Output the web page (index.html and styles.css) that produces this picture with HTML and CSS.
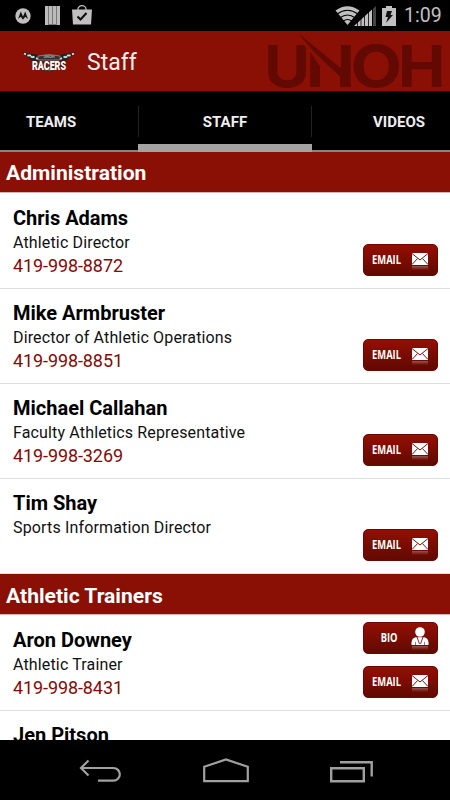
FILE: index.html
```html
<!DOCTYPE html>
<html lang="en">

<head>
  <title>Staff</title>
  <meta charset="UTF-8">
  <meta name="viewport" content="width=device-width, initial-scale=1">
  <link rel="stylesheet" href="styles.css">
</head>

<body>

  <!-- shared icons -->
  <svg class="sprite" width="0" height="0">
    <defs>
      <linearGradient id="fade" x1="0" y1="0" x2="0" y2="1">
        <stop offset="0" stop-color="#fff" stop-opacity=".3"/>
        <stop offset="1" stop-color="#fff" stop-opacity="0"/>
      </linearGradient>
    </defs>
    <symbol id="mail" viewBox="0 0 18 18">
      <rect x="1" y="1" width="16" height="12" fill="#fff"/>
      <path d="M1 1.500l8 6.500 8-6.500M1 12.500l5.600-6M17 12.500l-5.600-6" fill="none" stroke="#861008" stroke-width="1"/>
      <rect x="1" y="14" width="16" height="4" fill="url(#fade)"/>
    </symbol>
    <symbol id="person" viewBox="0 0 18 23">
      <circle cx="9" cy="5" r="4.800" fill="#fff"/>
      <path d="M.5 18v-2.500q.5-5 4.500-5.300h8q4 .3 4.500 5.300V18z" fill="#fff"/>
      <path d="M6 10l2.500 7M12 10l-2.500 7" fill="none" stroke="#861008" stroke-width=".9"/>
      <path d="M4.500 18v-3M13.500 18v-3" stroke="#861008" stroke-width=".6"/>
      <rect x="1" y="19" width="16" height="4" fill="url(#fade)"/>
    </symbol>
  </svg>

  <div class="status-bar">
    <div class="notifications">
      <svg width="16" height="16" viewBox="0 0 16 16">
        <circle cx="8" cy="8" r="7.700" fill="#c0c0c0"/>
        <path d="M3 11L5.800 3.500 8 8.400l2.200-4.900L13 11l-2.800-2.200L8 11.800 5.800 8.800z" fill="#111"/>
      </svg>
      <svg width="15" height="19" viewBox="0 0 15 19">
        <path d="M0 0h15v19H0z" fill="#777"/>
        <path d="M0 0h3v19H0zM4 0h3v18H4zM8 0h3v18H8zM12 0h3v19h-3z" fill="#bbb"/>
      </svg>
      <svg width="20" height="20" viewBox="0 0 20 20">
        <path d="M6 6V4a4 3.300 0 0 1 8 0v2" fill="none" stroke="#c0c0c0" stroke-width="1.300"/>
        <path d="M0 4.500h20L19 19.500H1z" fill="#c0c0c0"/>
        <path d="M5.500 11.500l3 3 6-6.500" fill="none" stroke="#111" stroke-width="2.200"/>
      </svg>
    </div>
    <div class="system">
      <svg class="wifi" width="25" height="19" viewBox="0 0 25 19">
        <path d="M0.500 4.500Q12.500-4 24.500 4.500L12.500 19z" fill="#c0c0c0"/>
        <path d="M2 8q10.500-7.500 21 0M5 11.800q7.500-5.500 15 0M8 15.300q4.500-3.500 9 0" fill="none" stroke="#000" stroke-width="1.100"/>
      </svg>
      <svg class="signal" width="22" height="20" viewBox="0 0 22 20">
        <path d="M0 20L18 3.500V20z" fill="#c0c0c0"/>
        <path d="M19 2.700L22 0v20h-3z" fill="#444"/>
        <path d="M3.500 14v6M7 10v10M10.500 7v13M14.500 4v16M18.500 0v20" stroke="#000" stroke-width=".8"/>
      </svg>
      <svg class="battery" width="14" height="20" viewBox="0 0 14 20">
        <path d="M4 0h6v2h4v18H0V2h4z" fill="#c0c0c0"/>
        <path d="M5 5h5l-1.500 4H11l-7 8 2-6H3.500z" fill="#111"/>
      </svg>
      <span class="clock">1:09</span>
    </div>
  </div>

  <div class="app-bar">
    <svg class="team-logo" width="56" height="24" viewBox="0 0 56 24">
      <path d="M1 3l15 2.500 9 7.500-13 0z" fill="#222"/>
      <path d="M55 3l-15 2.500-9 7.500 13 0z" fill="#222"/>
      <path d="M3 4.500l10 4.500M8 6l9 4M53 4.500L43 9M48 6l-9 4" stroke="#ddd" stroke-width="1.800" stroke-dasharray="2.200 1.600"/>
      <ellipse cx="28" cy="14" rx="11" ry="8" fill="#666" stroke="#333"/>
      <path d="M17 7q11-3 22 0v4H17z" fill="#333" stroke="#999" stroke-width=".7"/>
      <path d="M11 11.500h34v8H11z" fill="#5a1512"/>
      <text class="logo-small" x="28" y="8.700" text-anchor="middle">UNOH</text>
      <text class="logo-text" x="11" y="20.500" textLength="34" lengthAdjust="spacingAndGlyphs">RACERS</text>
    </svg>
    <h1>Staff</h1>
    <svg class="school-logo" width="184" height="60" viewBox="0 0 184 60">
      <text x="-2" y="56" textLength="46" lengthAdjust="spacingAndGlyphs">U</text>
      <text x="40" y="56" textLength="49" lengthAdjust="spacingAndGlyphs">N</text>
      <!-- the blade takes the place of the N's diagonal -->
      <path class="gap" d="M36 11L41 18 43 11H74V57H55V37L43 19V12z"/>
      <path d="M33 3L74 36.500l4-2 7 21.500L48 21z"/>
      <text x="84.500" y="56" textLength="51.500" lengthAdjust="spacingAndGlyphs">O</text>
      <text x="132" y="56" textLength="47.500" lengthAdjust="spacingAndGlyphs">H</text>
    </svg>
  </div>

  <div class="tabs">
    <div class="tab tab-left">TEAMS</div>
    <div class="tab active">STAFF</div>
    <div class="tab tab-right">VIDEOS</div>
  </div>

  <div class="staff-list">
    <h2>Administration</h2>
    <div class="person">
      <div class="info">
        <h3>Chris Adams</h3>
        <p>Athletic Director</p>
        <p class="phone">419-998-8872</p>
      </div>
      <div class="actions">
        <button><span>EMAIL</span><svg class="mail"><use href="#mail"/></svg></button>
      </div>
    </div>
    <div class="person">
      <div class="info">
        <h3>Mike Armbruster</h3>
        <p>Director of Athletic Operations</p>
        <p class="phone">419-998-8851</p>
      </div>
      <div class="actions">
        <button><span>EMAIL</span><svg class="mail"><use href="#mail"/></svg></button>
      </div>
    </div>
    <div class="person">
      <div class="info">
        <h3>Michael Callahan</h3>
        <p>Faculty Athletics Representative</p>
        <p class="phone">419-998-3269</p>
      </div>
      <div class="actions">
        <button><span>EMAIL</span><svg class="mail"><use href="#mail"/></svg></button>
      </div>
    </div>
    <div class="person">
      <div class="info">
        <h3>Tim Shay</h3>
        <p>Sports Information Director</p>
      </div>
      <div class="actions">
        <button><span>EMAIL</span><svg class="mail"><use href="#mail"/></svg></button>
      </div>
    </div>

    <h2 class="second">Athletic Trainers</h2>
    <div class="person">
      <div class="info">
        <h3>Aron Downey</h3>
        <p>Athletic Trainer</p>
        <p class="phone">419-998-8431</p>
      </div>
      <div class="actions">
        <button><span class="bio-label">BIO</span><svg class="bio"><use href="#person"/></svg></button>
        <button><span>EMAIL</span><svg class="mail"><use href="#mail"/></svg></button>
      </div>
    </div>
    <div class="person">
      <div class="info">
        <h3>Jen Pitson</h3>
      </div>
    </div>
  </div>

  <div class="nav-bar">
    <svg width="42" height="26" viewBox="0 0 42 26">
      <path d="M9.500 3.500L2 11l7.500 7.500M2 11h32.500a6.300 6.300 0 0 1 0 12.700H19" fill="none" stroke="#a0a0a0" stroke-width="2.200"/>
    </svg>
    <svg width="46" height="26" viewBox="0 0 46 26">
      <path d="M1.200 9.800L23 2.500l21.800 7.300v14.400H1.200z" fill="none" stroke="#a0a0a0" stroke-width="2.200"/>
    </svg>
    <svg width="43" height="26" viewBox="0 0 43 26">
      <path d="M1.200 11.200h32.600v13H1.200zM10 5.200h31.700v14.300" fill="none" stroke="#a0a0a0" stroke-width="2.400"/>
    </svg>
  </div>

</body>

</html>
```
FILE: styles.css
```css
body {
  font-family: Roboto, sans-serif;
  display: flex;
  flex-direction: column;
  width: 450px;
  height: 800px;
  margin: 0;
  overflow: hidden;
  background: #FFFFFF;
}

h1, h2, h3, p {
  margin: 0;
}

.sprite {
  position: absolute;
}

.status-bar {
  display: flex;
  justify-content: space-between;
  height: 31px;
  background: #000000;
}

.notifications {
  display: flex;
  align-items: center;
  gap: 14px;
  padding-left: 15px;
}

.notifications svg:last-child {
  margin-left: -2px;
  margin-bottom: 2px;
}

.system {
  display: flex;
  align-items: center;
  padding-right: 8px;
}

.signal {
  margin-left: -6px;
}

.battery {
  margin-left: 6px;
}

.clock {
  width: 38px;
  margin-left: 8px;
  font-size: 19.5px;
  line-height: 32px;
  color: #C0C0C0;
}

.app-bar {
  display: flex;
  align-items: center;
  box-sizing: border-box;
  height: 61px;
  padding-left: 21px;
  background: #8A0F05;
  border-bottom: 1px solid #3A0703;
}

.team-logo,
.school-logo {
  overflow: visible;
}

.logo-small {
  font-size: 4px;
  font-weight: bold;
  fill: #AAAAAA;
}

.logo-text {
  font-size: 12px;
  font-weight: 900;
  fill: #FFFFFF;
}

h1 {
  margin-left: 10px;
  padding-top: 3px;
  font-size: 23px;
  font-weight: normal;
  line-height: 30px;
  color: #F5EDEC;
}

.school-logo {
  margin-left: auto;
  font-family: Inter, sans-serif;
  font-size: 58px;
  font-weight: 700;
  fill: #620903;
}

.gap {
  fill: #8A0F05;
}

.tabs {
  display: grid;
  grid-template-columns: 138px 174px 138px;
  grid-template-rows: 60px;
  height: 60px;
  background: #000000;
}

.tab {
  box-sizing: border-box;
  height: 60px;
  line-height: 60px;
  border-bottom: 2px solid #858585;
  font-size: 15px;
  font-weight: bold;
  color: #EEEEEE;
}

.tab-left {
  padding-left: 26px;
}

.tab-right {
  padding-right: 25px;
  text-align: right;
}

.active {
  border-bottom: 8px solid #A3A3A3;
  text-align: center;
  background: linear-gradient(#222222, #222222) 0 14px / 1px 31px no-repeat, linear-gradient(#222222, #222222) 100% 14px / 1px 31px no-repeat;
}

.staff-list {
  flex: 1;
  min-height: 0;
  overflow: hidden;
}

h2 {
  box-sizing: border-box;
  height: 41px;
  margin-bottom: 1px;
  padding-left: 6px;
  font-size: 21.1px;
  line-height: 42px;
  color: #FFFFFF;
  background: #8A0F05;
  border-bottom: 1px solid #D8B5B2;
}

.second {
  line-height: 44px;
}

.person {
  display: flex;
  justify-content: space-between;
  box-sizing: border-box;
  height: 95px;
  padding: 11px 12px 0 13px;
  border-bottom: 1px solid #DEDEDE;
}

h3 {
  font-size: 20px;
  line-height: 26px;
  color: #000000;
}

.info p {
  font-size: 16px;
  line-height: 23px;
  letter-spacing: 0.15px;
  color: #111111;
}

.info .phone {
  font-size: 18px;
  line-height: 24px;
  letter-spacing: -0.1px;
  color: #850A05;
}

.actions {
  display: flex;
  flex-direction: column;
  justify-content: flex-end;
  gap: 12px;
  padding-bottom: 12px;
}

button {
  display: grid;
  grid-template-columns: 46px 20px;
  flex-shrink: 0;
  align-items: center;
  justify-items: center;
  width: 75px;
  height: 32px;
  padding: 0;
  border: 1px solid #6A0904;
  border-radius: 5px;
  background: linear-gradient(#930F03, #610902);
  font-family: "Open Sans", sans-serif;
  font-size: 12px;
  font-weight: bold;
  color: #FFFFFF;
}

button span {
  padding-bottom: 2px;
  transform: scaleX(0.78);
}

.bio-label {
  padding-left: 6px;
}

.mail {
  width: 18px;
  height: 18px;
  margin-top: 2px;
}

.bio {
  width: 18px;
  height: 23px;
}

.nav-bar {
  display: flex;
  justify-content: space-between;
  height: 43px;
  padding: 17px 77px 0 79px;
  background: #000000;
}
```
